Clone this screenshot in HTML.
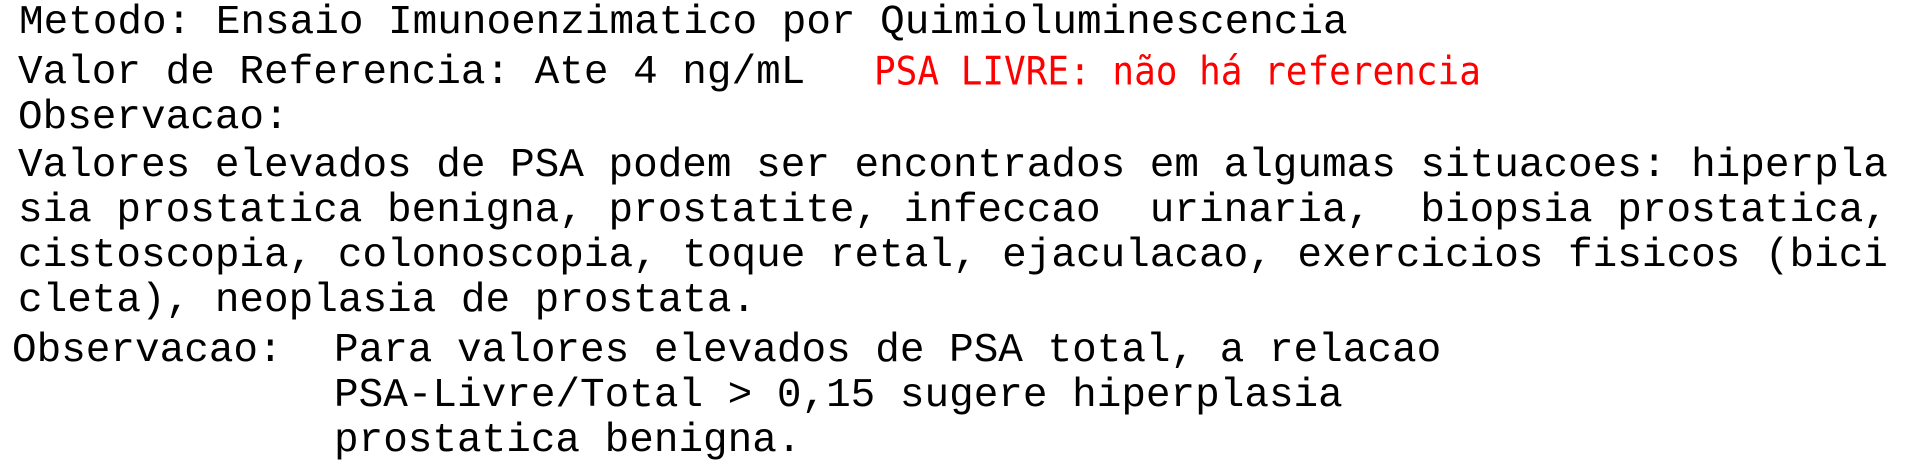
<!DOCTYPE html>
<html><head><meta charset="utf-8"><style>
html,body{margin:0;padding:0;background:#fff;}
body{width:1905px;height:458px;position:relative;overflow:hidden;}
.l{position:absolute;white-space:pre;font-family:"Liberation Mono",monospace;font-size:41px;line-height:44px;color:#000;}
.r{position:absolute;white-space:pre;font-family:"DejaVu Sans Mono",monospace;font-size:36px;line-height:40px;color:#ff0000;transform:scaleY(1.08);transform-origin:0 100%;}
</style></head><body>
<div class="l" style="left:19px;top:1px">Metodo: Ensaio Imunoenzimatico por Quimioluminescencia</div>
<div class="l" style="left:18px;top:51px">Valor de Referencia: Ate 4 ng/mL</div>
<div class="r" style="left:874px;top:54px">PSA LIVRE: não há referencia</div>
<div class="l" style="left:18px;top:96px">Observacao:</div>
<div class="l" style="left:18px;top:144px">Valores elevados de PSA podem ser encontrados em algumas situacoes: hiperpla</div>
<div class="l" style="left:18px;top:189px">sia prostatica benigna, prostatite, infeccao  urinaria,  biopsia prostatica,</div>
<div class="l" style="left:18px;top:234px">cistoscopia, colonoscopia, toque retal, ejaculacao, exercicios fisicos (bici</div>
<div class="l" style="left:18px;top:279px">cleta), neoplasia de prostata.</div>
<div class="l" style="left:12px;top:329px">Observacao:</div>
<div class="l" style="left:334px;top:329px">Para valores elevados de PSA total, a relacao</div>
<div class="l" style="left:334px;top:374px">PSA-Livre/Total &gt; 0,15 sugere hiperplasia</div>
<div class="l" style="left:334px;top:419px">prostatica benigna.</div>
</body></html>
